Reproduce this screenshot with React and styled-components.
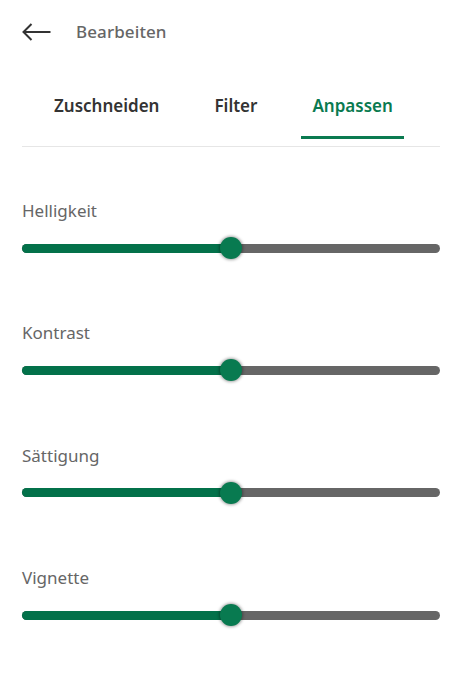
import React from "react";
import styled, { createGlobalStyle } from "styled-components";

const Global = createGlobalStyle`
  html, body { margin: 0; padding: 0; background: #fff; }
  body { font-family: "Noto Sans", "Open Sans", sans-serif; }
`;

const Page = styled.div`
  width: 466px;
  height: 698px;
  box-sizing: border-box;
  padding: 0 26px 0 22px;
  background: #fff;
`;

const Header = styled.div`
  display: flex;
  align-items: center;
  height: 64px;
  gap: 25px;
`;

const BackButton = styled.button`
  border: 0;
  background: none;
  padding: 0;
  width: 29px;
  height: 22px;
  display: flex;
  align-items: center;
  cursor: pointer;
`;

const Title = styled.div`
  font-size: 17px;
  font-weight: 500;
  color: #666;
  margin-top: -1px;
  letter-spacing: 0.1px;
`;

const Tabs = styled.div`
  display: flex;
  align-items: flex-start;
  padding: 18px 0 0 21px;
  gap: 33px;
  border-bottom: 1px solid #e6e6e6;
`;

const Tab = styled.div`
  position: relative;
  padding: 0 11px;
  font-size: 17px;
  font-weight: 600;
  line-height: 48px;
  height: 64px;
  color: ${(p) => (p.$active ? "#0a7a50" : "#333")};
  &::after {
    content: "";
    display: ${(p) => (p.$active ? "block" : "none")};
    position: absolute;
    left: 0;
    right: 0;
    bottom: 7px;
    height: 3px;
    background: #0a7a50;
  }
`;

const Controls = styled.div`
  display: flex;
  flex-direction: column;
  gap: 63.4px;
  padding-top: 53px;
`;

const Row = styled.div`
  display: flex;
  flex-direction: column;
  gap: 15px;
`;

const Label = styled.div`
  font-size: 17px;
  line-height: 22px;
  color: #666;
`;

const Track = styled.div`
  position: relative;
  height: 22px;
  display: flex;
  align-items: center;
`;

const Rail = styled.div`
  position: relative;
  width: 100%;
  height: 9px;
  border-radius: 5px;
  background: #666;
`;

const Fill = styled.div`
  position: absolute;
  left: 0;
  top: 0;
  bottom: 0;
  border-radius: 5px;
  background: #03714a;
`;

const Thumb = styled.div`
  position: absolute;
  top: 50%;
  width: 22px;
  height: 22px;
  border-radius: 50%;
  background: #087a50;
  transform: translate(-50%, -50%);
  box-shadow: 0 0 3px 1px rgba(0, 0, 0, 0.35);
`;

function Slider({ label, value }) {
  const pct = `${value}%`;
  return (
    <Row>
      <Label>{label}</Label>
      <Track>
        <Rail>
          <Fill style={{ width: pct }} />
          <Thumb style={{ left: pct }} />
        </Rail>
      </Track>
    </Row>
  );
}

export default function App() {
  return (
    <Page>
      <Global />
      <Header>
        <BackButton aria-label="Zurück">
          <svg width="29" height="18" viewBox="0 0 29 18" fill="none">
            <path d="M1.5 9H28.5" stroke="#333" strokeWidth="2" />
            <path d="M9.5 1L1.5 9L9.5 17" stroke="#333" strokeWidth="2" strokeLinejoin="miter" />
          </svg>
        </BackButton>
        <Title>Bearbeiten</Title>
      </Header>
      <Tabs>
        <Tab>Zuschneiden</Tab>
        <Tab>Filter</Tab>
        <Tab $active>Anpassen</Tab>
      </Tabs>
      <Controls>
        <Slider label="Helligkeit" value={50} />
        <Slider label="Kontrast" value={50} />
        <Slider label="Sättigung" value={50} />
        <Slider label="Vignette" value={50} />
      </Controls>
    </Page>
  );
}
